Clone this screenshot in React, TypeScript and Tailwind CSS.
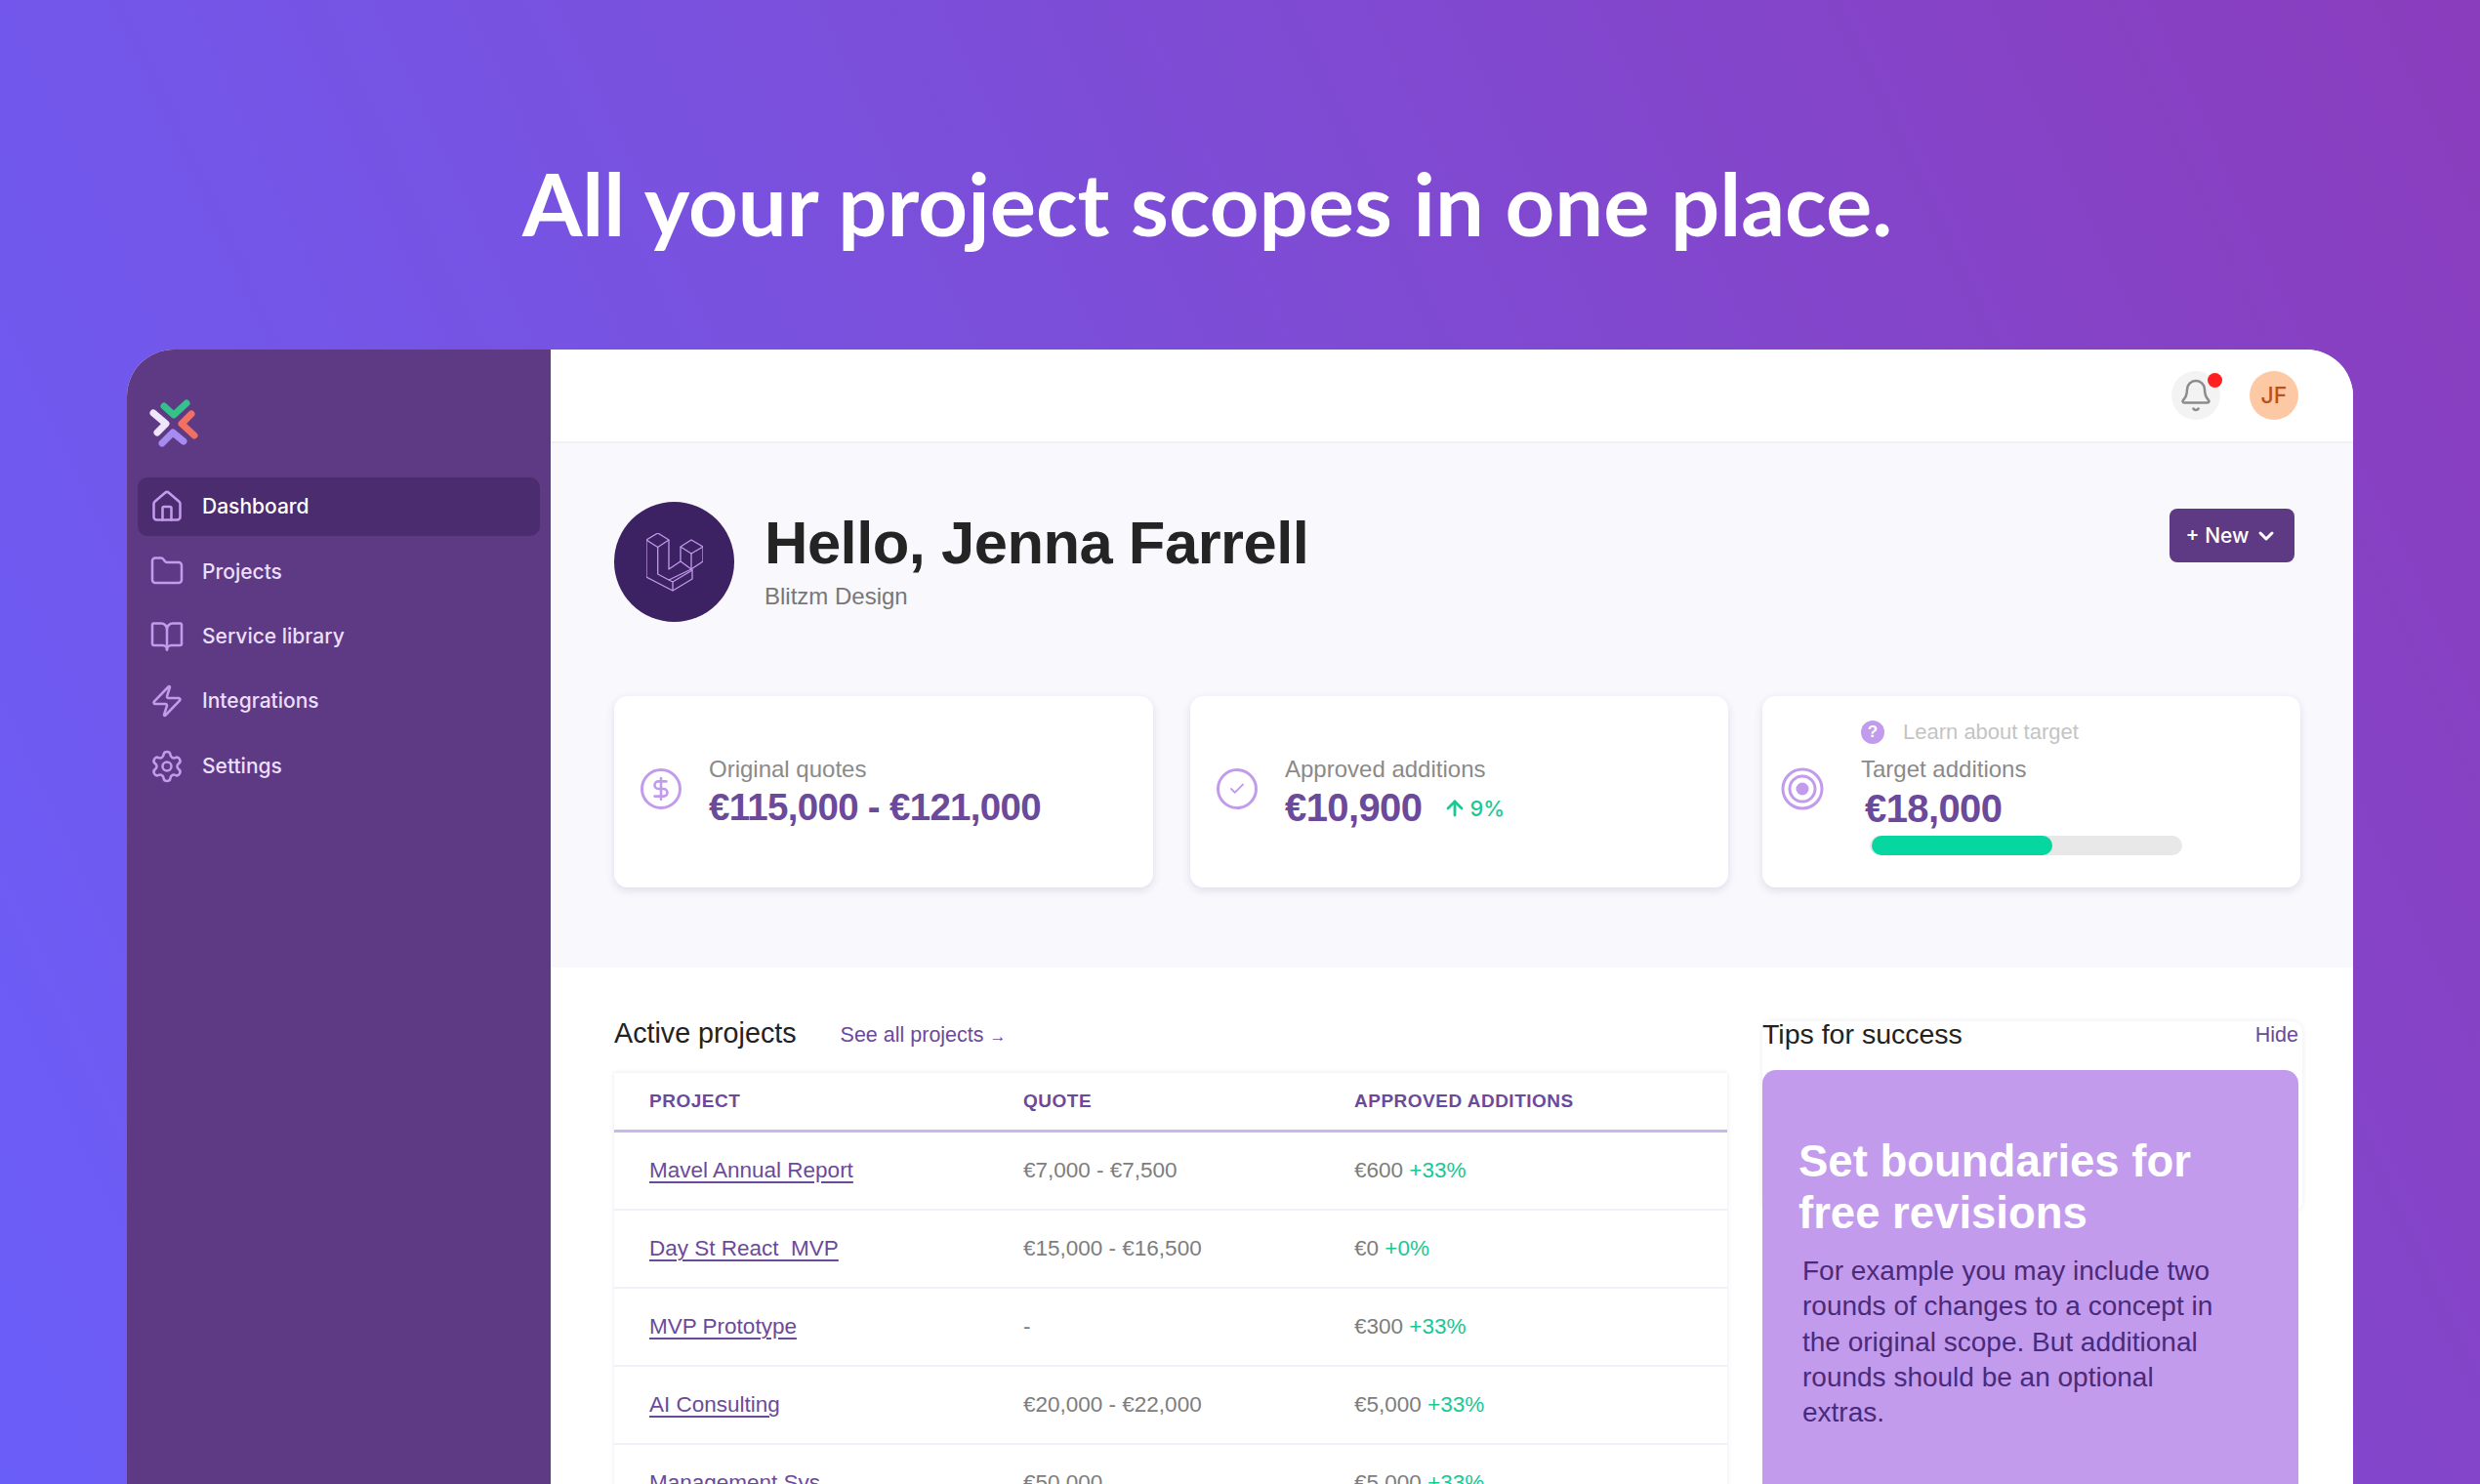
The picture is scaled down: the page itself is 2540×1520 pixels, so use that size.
import { House, Folder, BookOpen, Zap, Settings, Bell, ChevronDown, DollarSign, Check, ArrowUp } from "lucide-react";

const nav = [
  { label: "Dashboard", icon: House, active: true },
  { label: "Projects", icon: Folder },
  { label: "Service library", icon: BookOpen },
  { label: "Integrations", icon: Zap },
  { label: "Settings", icon: Settings },
];

const projects = [
  { name: "Mavel Annual Report", quote: "€7,000 - €7,500", added: "€600", pct: "+33%" },
  { name: "Day St React  MVP", quote: "€15,000 - €16,500", added: "€0", pct: "+0%" },
  { name: "MVP Prototype", quote: "-", added: "€300", pct: "+33%" },
  { name: "AI Consulting", quote: "€20,000 - €22,000", added: "€5,000", pct: "+33%" },
  { name: "Management Sys", quote: "€50,000", added: "€5,000", pct: "+33%" },
];

function Logo() {
  return (
    <svg width="54" height="54" viewBox="0 0 54 54" fill="none" strokeWidth="7" strokeLinecap="round" strokeLinejoin="round">
      <path d="M5 15 L18 26 L9 35" stroke="#efe6fa" />
      <path d="M16 8 L26 17 L39 5" stroke="#35c18a" />
      <path d="M44 16 L34 26 L47 38" stroke="#f2705f" />
      <path d="M14 46 L25 35 L36 44" stroke="#a68cf0" />
    </svg>
  );
}

function LaravelMark() {
  return (
    <svg width="58" height="60" viewBox="0 0 58 60" fill="none" stroke="#c39bec" strokeWidth="1.3" strokeLinejoin="round">
      <path d="M11.7 0 L23 7 L11.7 14.5 L0 7 Z" />
      <path d="M0 7 V45 L27 59 L47 47 V37" />
      <path d="M11.7 14.5 V42 L23 48 L46 37" />
      <path d="M23 7 V37 L35 29" />
      <path d="M23 48 L27 50 V59" />
      <path d="M27 50 L47 38" />
      <path d="M46 7 L58 14 L46 21 L35 14 Z" />
      <path d="M35 14 V29 L46 37 L58 29 V14" />
      <path d="M46 21 V37" />
    </svg>
  );
}

function StatCard({ icon, children, className }: any) {
  return (
    <div className={"flex items-center h-[196px] bg-white rounded-[14px] shadow-[0_3px_8px_rgba(60,40,110,0.13)] " + (className || "")}>
      {icon}
      <div>{children}</div>
    </div>
  );
}

export default function App() {
  return (
    <main className="h-[1520px] overflow-hidden bg-[linear-gradient(65deg,#6a5ef9_0%,#7a50dc_45%,#8a3dbd_100%)] font-['Liberation_Sans',sans-serif]">
      <h1 className="h-[358px] pt-[147px] pl-[535px] text-[88.5px] leading-[122px] font-bold text-white font-['Lato',sans-serif]">
        All your project scopes in one place.
      </h1>

      <div className="ml-[130px] w-[2280px] h-[1162px] flex rounded-t-[48px] overflow-hidden bg-white">
        {/* Sidebar */}
        <aside className="w-[434px] shrink-0 bg-[#5e3a85] px-[11px] font-['Inter',sans-serif]">
          <div className="h-[131px] pt-[50px] pl-[11px]">
            <Logo />
          </div>
          <nav className="flex flex-col gap-[6.4px]">
            {nav.map((item) => {
              const Icon = item.icon;
              return (
                <div
                  key={item.label}
                  className={
                    item.active
                      ? "flex items-center h-[60px] pl-[12px] gap-[18px] rounded-[10px] bg-[#4b2c6f] text-white text-[21px] font-medium"
                      : "flex items-center h-[60px] pl-[12px] gap-[18px] text-[#ecdffb] text-[21px] font-medium"
                  }
                >
                  <Icon size={36} strokeWidth={1.7} className="text-[#c39bec]" />
                  <span>{item.label}</span>
                </div>
              );
            })}
          </nav>
        </aside>

        <div className="flex-1 min-w-0">
          {/* Top bar */}
          <header className="h-[96px] flex items-center justify-end gap-[30px] pr-[56px] border-b-2 border-[#f1f1f5] bg-white font-['Inter',sans-serif]">
            <div className="relative w-[50px] h-[50px] rounded-full bg-[#f3f3f3] flex items-center justify-center">
              <Bell size={36} strokeWidth={1.7} className="text-[#8c8c8c]" />
              <span className="absolute right-[-2px] top-[2px] w-[15px] h-[15px] rounded-full bg-[#ff2020]" />
            </div>
            <div className="w-[50px] h-[50px] rounded-full bg-[#fcc9a4] flex items-center justify-center text-[#b8521c] text-[23px] font-medium">
              JF
            </div>
          </header>

          {/* Greeting and stats */}
          <section className="h-[537px] bg-[#f8f8fd] pl-[65px] pr-[53px] pt-[60px]">
            <div className="flex items-start">
              <div className="w-[123px] h-[123px] rounded-full bg-[#3c2163] flex items-center justify-center">
                <LaravelMark />
              </div>
              <div className="ml-[31px] pt-[5px]">
                <div className="text-[61.5px] leading-[74px] font-bold text-[#242424] tracking-[-0.5px]">Hello, Jenna Farrell</div>
                <div className="text-[24px] leading-[30px] mt-[3px] text-[#777777]">Blitzm Design</div>
              </div>
              <button className="ml-auto mt-[7px] mr-[7px] w-[128px] h-[55px] rounded-[8px] bg-[#5e3a85] text-white text-[21px] font-medium font-['Inter',sans-serif] flex items-center justify-center gap-[6px]">
                + New
                <ChevronDown size={24} strokeWidth={3} />
              </button>
            </div>

            <div className="grid grid-cols-[552px_552px_551px] gap-[36px] mt-[76px]">
              <StatCard
                icon={
                  <div className="ml-[27px] mr-[28px] mb-[7px] w-[42px] h-[42px] rounded-full border-[3px] border-[#c39bec] flex items-center justify-center shrink-0">
                    <DollarSign size={26} strokeWidth={2.4} className="text-[#c39bec]" />
                  </div>
                }
              >
                <div className="text-[24px] leading-[30px] mt-[2px] text-[#8a8a8a]">Original quotes</div>
                <div className="text-[38.5px] leading-[50px] font-bold text-[#6b4a9b] tracking-[-0.7px] mt-[-1px]">€115,000 - €121,000</div>
              </StatCard>
              <StatCard
                className="ml-[2px] mr-[-1px]"
                icon={
                  <div className="ml-[27px] mr-[28px] mb-[7px] w-[42px] h-[42px] rounded-full border-[3px] border-[#c39bec] flex items-center justify-center shrink-0">
                    <Check size={18} strokeWidth={2.4} className="text-[#c39bec]" />
                  </div>
                }
              >
                <div className="text-[24px] leading-[30px] mt-[2px] text-[#8a8a8a]">Approved additions</div>
                <div className="flex items-center mt-[-1px]">
                  <span className="text-[40px] leading-[50px] font-bold text-[#6b4a9b] tracking-[-0.6px]">€10,900</span>
                  <ArrowUp size={24} strokeWidth={2.8} className="text-[#17c995] ml-[22px] mt-[3px]" />
                  <span className="text-[22px] font-medium font-['Inter',sans-serif] text-[#17c995] ml-[3px] mt-[3px]">9%</span>
                </div>
              </StatCard>
              <StatCard
                icon={
                  <svg width="44" height="44" viewBox="0 0 44 44" fill="none" className="ml-[19px] mr-[38px] mb-[7px] shrink-0">
                    <circle cx="22" cy="22" r="20" stroke="#c39bec" strokeWidth="3" />
                    <circle cx="22" cy="22" r="13" stroke="#c39bec" strokeWidth="3" />
                    <circle cx="22" cy="22" r="6.5" fill="#c39bec" />
                  </svg>
                }
              >
                <div className="flex items-center gap-[19px] h-[28px] -mt-[11px]">
                  <span className="w-[24px] h-[24px] rounded-full bg-[#c39bec] text-white text-[17px] font-bold flex items-center justify-center">?</span>
                  <span className="text-[22px] text-[#c4c4c4]">Learn about target</span>
                </div>
                <div className="text-[24px] leading-[30px] mt-[9px] text-[#8a8a8a]">Target additions</div>
                <div className="text-[40px] leading-[50px] font-bold text-[#6b4a9b] tracking-[-0.6px] ml-[4px]">€18,000</div>
                <div className="w-[320px] h-[20px] ml-[9px] mt-[3px] rounded-full bg-[#e8e8e8] pl-[2px]">
                  <div className="w-[185px] h-[20px] rounded-full bg-[#06d6a0]" />
                </div>
              </StatCard>
            </div>
          </section>

          {/* Projects and tips */}
          <section className="pl-[65px] pr-[53px] pt-[50px] grid grid-cols-[1140px_549px] gap-[36px]">
            <div>
              <div className="h-[36px] flex items-center">
                <span className="text-[28.7px] text-[#222222]">Active projects</span>
                <span className="ml-[45px] mt-[2px] text-[21.5px] text-[#6b4a9b]">
                  See all projects <span className="text-[17px]">→</span>
                </span>
              </div>
              <div className="mt-[22px] bg-white shadow-[0_0_5px_rgba(60,40,110,0.12)]">
                <div className="grid grid-cols-[383px_339px_1fr] items-center h-[61px] pl-[36px] border-b-[3px] border-[#c9b8ea] text-[19px] font-bold tracking-[0.5px] text-[#6b4a9b]">
                  <span>PROJECT</span>
                  <span>QUOTE</span>
                  <span>APPROVED ADDITIONS</span>
                </div>
                {projects.map((p) => (
                  <div key={p.name} className="grid grid-cols-[383px_339px_1fr] items-center h-[80px] pl-[36px] border-b-2 border-[#f1eff7] text-[22.5px]">
                    <span className="text-[#6b4a9b] underline underline-offset-[4px] whitespace-pre">{p.name}</span>
                    <span className="text-[#7d7d7d]">{p.quote}</span>
                    <span className="text-[#7d7d7d]">
                      {p.added} <span className="text-[#17c995]">{p.pct}</span>
                    </span>
                  </div>
                ))}
              </div>
            </div>

            <div className="relative">
              <div className="absolute left-0 right-[-4px] top-[5px] h-[195px] rounded-[10px] shadow-[0_0_5px_rgba(60,40,110,0.1)]" />
              <div className="relative h-[36px] flex items-center justify-between">
                <span className="text-[28.5px] text-[#222222]">Tips for success</span>
                <span className="mt-[2px] text-[21.5px] text-[#6b4a9b]">Hide</span>
              </div>
              <div className="relative mt-[19px] h-[500px] rounded-t-[14px] bg-[#c39bec] pt-[67px] pl-[37px] pr-[40px]">
                <div className="text-[45.5px] leading-[53px] font-bold text-white">Set boundaries for free revisions</div>
                <p className="mt-[15px] ml-[4px] w-[436px] text-[28px] leading-[36.3px] text-[#4a2a7a]">
                  For example you may include two rounds of changes to a concept in the original scope. But additional rounds should be an optional extras.
                </p>
              </div>
            </div>
          </section>
        </div>
      </div>
    </main>
  );
}
